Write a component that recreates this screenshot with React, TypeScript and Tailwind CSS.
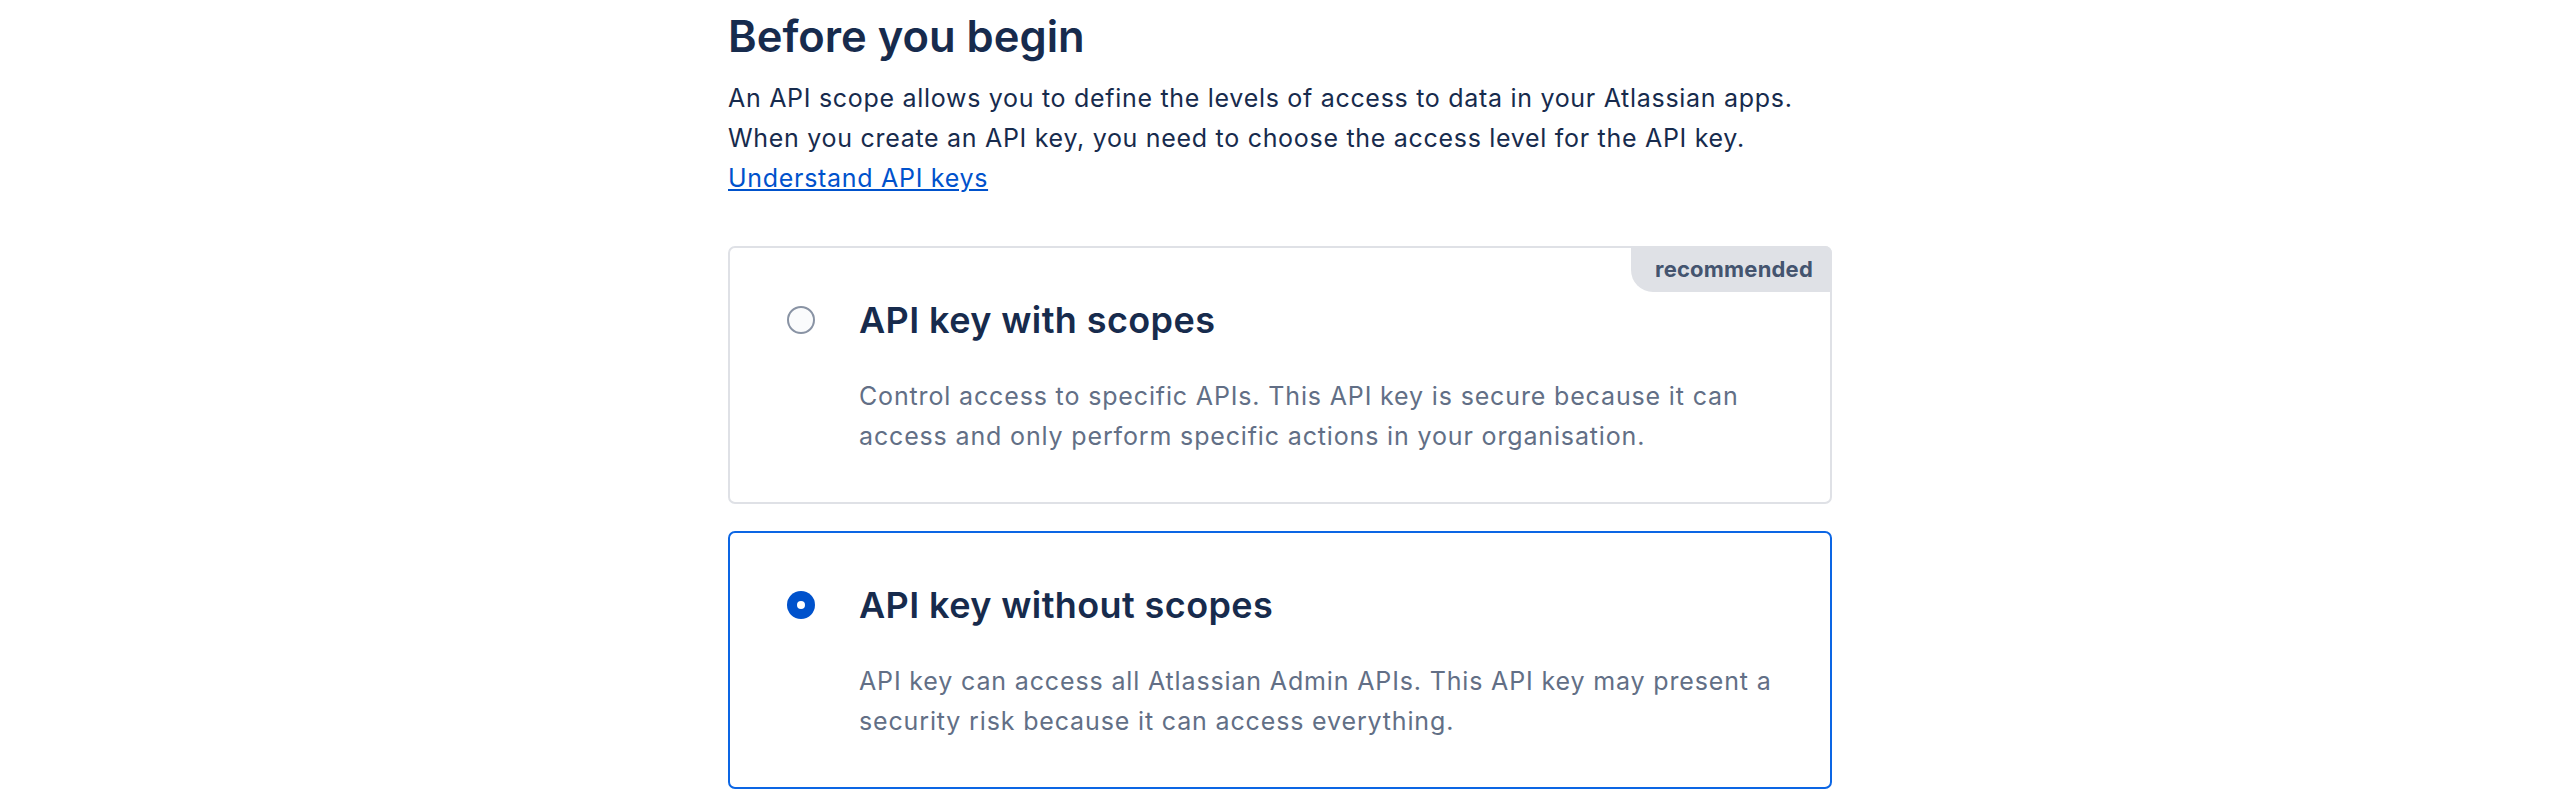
import React from 'react';

type Option = {
  title: string;
  description: string;
  selected: boolean;
  recommended?: boolean;
};

const options: Option[] = [
  {
    title: 'API key with scopes',
    description:
      'Control access to specific APIs. This API key is secure because it can access and only perform specific actions in your organisation.',
    selected: false,
    recommended: true,
  },
  {
    title: 'API key without scopes',
    description:
      'API key can access all Atlassian Admin APIs. This API key may present a security risk because it can access everything.',
    selected: true,
  },
];

const Radio = ({ checked }: { checked: boolean }) =>
  checked ? (
    <span className="flex h-[28px] w-[28px] items-center justify-center rounded-full bg-[#0052CC]">
      <span className="h-[8px] w-[8px] rounded-full bg-white" />
    </span>
  ) : (
    <span className="block h-[28px] w-[28px] rounded-full border-2 border-[#8993A4] bg-[#FAFBFC]" />
  );

const OptionCard = ({ option }: { option: Option }) => (
  <div
    className={
      option.selected
        ? 'relative h-[258px] rounded-[7px] border-2 border-[#0C66E4] bg-white'
        : 'relative h-[258px] rounded-[7px] border-2 border-[#DFE1E6] bg-white'
    }
  >
    {option.recommended && (
      <div className="absolute right-[-2px] top-[-2px] flex h-[46px] items-center rounded-bl-[22px] rounded-tr-[7px] bg-[#DFE1E6] pl-[24px] pr-[19px] text-[22px] font-bold tracking-[0.2px] text-[#44546F]">
        recommended
      </div>
    )}
    <div className="flex pl-[57px] pr-[36px] pt-[50px]">
      <div className="flex h-[44px] w-[72px] shrink-0 items-center">
        <Radio checked={option.selected} />
      </div>
      <div>
        <h3 className="text-[36px] font-semibold leading-[44px] tracking-[0.4px] text-[#172B4D]">
          {option.title}
        </h3>
        <p className="mt-[34px] text-[25px] leading-[40px] tracking-[0.85px] text-[#626F86]">
          {option.description}
        </p>
      </div>
    </div>
  </div>
);

export default function App() {
  return (
    <div className="min-h-[810px] bg-white font-['Inter',sans-serif]">
      <section className="mx-auto w-[1104px] pt-[10px]">
        <h2 className="text-[43.5px] font-semibold leading-[52px] text-[#172B4D]">
          Before you begin
        </h2>
        <p className="mt-[16px] text-[25px] leading-[40px] tracking-[0.7px] text-[#172B4D]">
          An API scope allows you to define the levels of access to data in your Atlassian apps.
          <br />
          When you create an API key, you need to choose the access level for the API key.
          <br />
          <a href="#" className="text-[#0052CC] underline">
            Understand API keys
          </a>
        </p>

        <div className="mt-[48px] flex flex-col gap-[27px]">
          {options.map((option) => (
            <OptionCard key={option.title} option={option} />
          ))}
        </div>
      </section>
    </div>
  );
}
